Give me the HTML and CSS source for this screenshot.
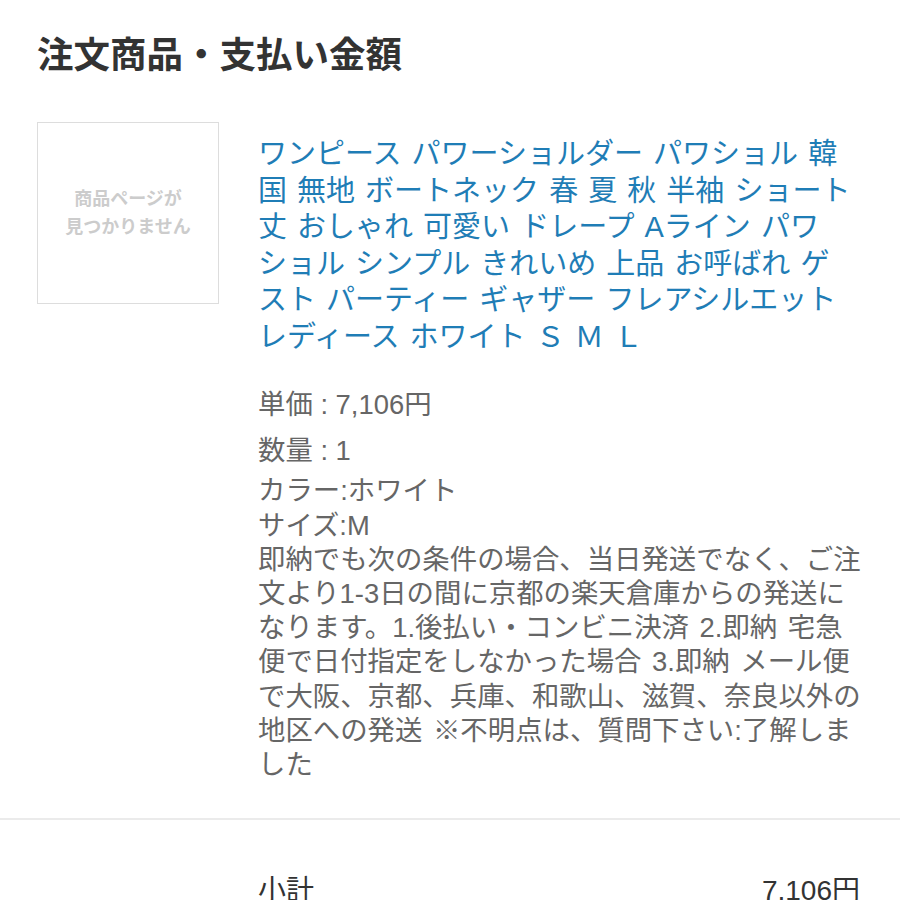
FILE: index.html
```html
<!DOCTYPE html>
<html lang="ja">
<head>
    <meta charset="UTF-8">
    <meta name="viewport" content="width=device-width, initial-scale=1.0">
    <title>注文商品・支払い金額</title>
    <link rel="stylesheet" href="styles.css">
</head>
<body>
    <div class="section">
        <h2 class="section-title">注文商品・支払い金額</h2>
        <div class="item">
            <div class="thumb">
                <span>商品ページが<br>見つかりません</span>
            </div>
            <div class="info">
                <a class="item-name" href="#">ワンピース パワーショルダー パワショル 韓国 無地 ボートネック 春 夏 秋 半袖 ショート丈 おしゃれ 可愛い ドレープ Aライン パワショル シンプル きれいめ 上品 お呼ばれ ゲスト パーティー ギャザー フレアシルエット レディース ホワイト Ｓ Ｍ Ｌ</a>
                <p class="price">単価 : 7,106円</p>
                <p class="qty">数量 : 1</p>
                <p class="options">カラー:ホワイト<br>サイズ:M<br>即納でも次の条件の場合、当日発送でなく、ご注文より1-3日の間に京都の楽天倉庫からの発送になります。1.後払い・コンビニ決済 2.即納 宅急便で日付指定をしなかった場合 3.即納 メール便で大阪、京都、兵庫、和歌山、滋賀、奈良以外の地区への発送 ※不明点は、質問下さい:了解しました</p>
            </div>
        </div>
    </div>

    <div class="summary">
        <div class="summary-row">
            <span>小計</span>
            <span>7,106円</span>
        </div>
    </div>
</body>
</html>
```

FILE: styles.css
```css
body {
    margin: 0;
    font-family: "Liberation Sans", "Noto Sans CJK JP", sans-serif;
    color: #333;
    background: #fff;
}
.section {
    padding: 31px 37px 36px;
    border-bottom: 2px solid #ebebeb;
}
.section-title {
    margin: 0 0 41px;
    font-size: 36.5px;
    line-height: 50px;
    font-weight: bold;
    color: #333;
}
.item {
    display: flex;
    gap: 39px;
}
.thumb {
    flex: none;
    width: 180px;
    height: 180px;
    border: 1px solid #ddd;
    display: flex;
    align-items: center;
    justify-content: center;
    text-align: center;
}
.thumb span {
    font-size: 18px;
    line-height: 28px;
    font-weight: bold;
    color: #ccc;
}
.info {
    flex: 1;
    padding-top: 14px;
    line-break: strict;
}
.item-name {
    display: block;
    padding-right: 9px;
    font-size: 29px;
    line-height: 36.5px;
    word-spacing: 2px;
    color: #1f7db6;
    text-decoration: none;
    margin-bottom: 33px;
}
.price, .qty, .options {
    margin: 0;
    font-size: 27.4px;
    line-height: 34.2px;
    color: #666;
}
.options {
    word-spacing: 3px;
}
.price {
    margin-bottom: 12px;
}
.qty {
    margin-bottom: 6px;
}
.summary {
    padding: 51px 40px 0 258px;
}
.summary-row {
    display: flex;
    justify-content: space-between;
    font-size: 28px;
    line-height: 40px;
    color: #333;
}
```
